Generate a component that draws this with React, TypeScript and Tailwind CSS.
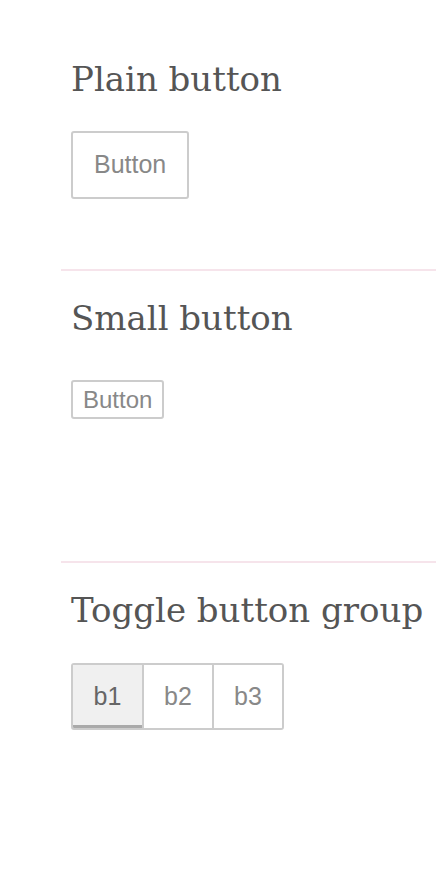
import React from 'react';

const headingCls = "font-['DejaVu_Serif',serif] text-[34px] leading-[40px] font-normal text-[#555]";
const btnFont = "font-['Liberation_Sans',Arial,sans-serif]";

export default function App() {
  return (
    <div className="min-h-screen bg-white pl-[61px]">
      {/* Plain button */}
      <section className="pl-[10px] pt-[59px] pb-[70px] border-b-2 border-[#f6e4eb]">
        <h2 className={headingCls}>Plain button</h2>
        <button
          className={`${btnFont} mt-[32px] block h-[68px] px-[21px] rounded-[3px] border-2 border-[#ccc] bg-white text-[25px] text-[#888]`}
        >
          Button
        </button>
      </section>

      {/* Small button */}
      <section className="pl-[10px] pt-[27px] pb-[142px] border-b-2 border-[#f6e4eb]">
        <h2 className={headingCls}>Small button</h2>
        <button
          className={`${btnFont} mt-[42px] block h-[39px] px-[10px] rounded-[3px] border-2 border-[#ccc] bg-white text-[24px] leading-none text-[#888]`}
        >
          Button
        </button>
      </section>

      {/* Toggle button group */}
      <section className="pl-[10px] pt-[27px] pb-[100px]">
        <h2 className={headingCls}>Toggle button group</h2>
        <div className={`${btnFont} mt-[33px] inline-flex h-[67px] rounded-[3px] border-2 border-[#ccc] overflow-hidden`}>
          <button className="w-[69px] pt-[3px] bg-[#f0f0f0] border-b-[3px] border-[#aaa] text-[25px] text-[#666]">b1</button>
          <button className="w-[70px] border-l-2 border-[#ccc] bg-white text-[25px] text-[#888]">b2</button>
          <button className="w-[70px] border-l-2 border-[#ccc] bg-white text-[25px] text-[#888]">b3</button>
        </div>
      </section>
    </div>
  );
}
